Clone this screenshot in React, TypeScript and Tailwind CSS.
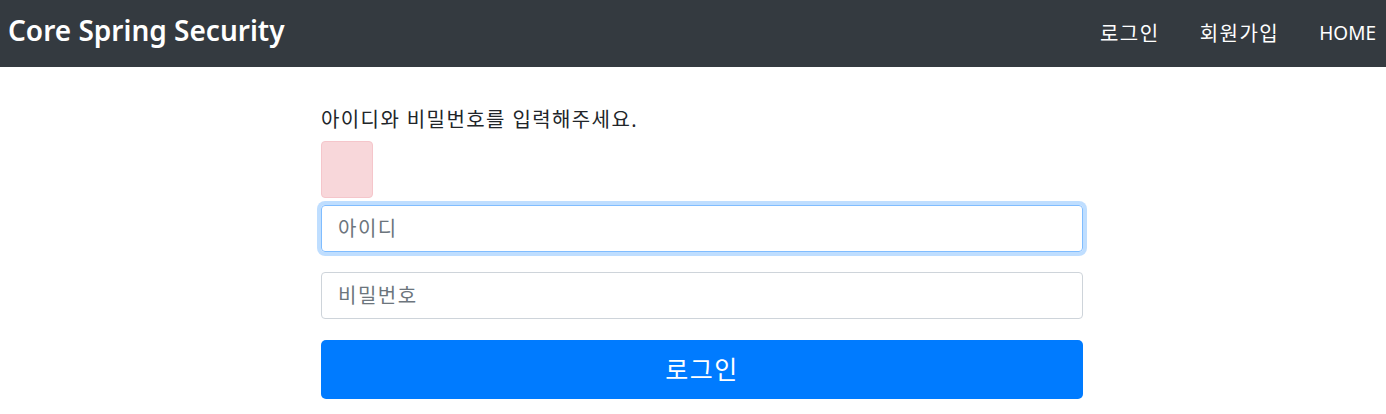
import React from 'react';

const font = { fontFamily: '"Noto Sans", "Noto Sans CJK KR", sans-serif' };

function Navbar() {
  return (
    <div className="flex h-[67px] items-center justify-between bg-[#343a40] pl-[8px] pr-[10px]">
      <div className="pb-[8px] text-[28px] font-semibold text-white">Core Spring Security</div>
      <div className="flex items-center gap-[40px] text-[20px] text-white">
        <span className="tracking-[1.5px]">로그인</span>
        <span className="tracking-[1.5px]">회원가입</span>
        <span className="text-[19px]">HOME</span>
      </div>
    </div>
  );
}

export default function App() {
  return (
    <div className="min-h-[414px] bg-white text-[#212529]" style={font}>
      <Navbar />
      <div className="ml-[321px] w-[762px] pt-[39px]">
        <div className="text-[20px] leading-[28px] tracking-[1.4px]">아이디와 비밀번호를 입력해주세요.</div>
        <div className="mt-[7px] h-[57px] w-[52px] rounded-[4px] border border-[#f5c6cb] bg-[#f8d7da]" />
        <div className="mt-[7px] flex h-[47px] items-center rounded-[4px] border border-[#80bdff] px-[16px] text-[20px] tracking-[1.5px] text-[#6c757d] shadow-[0_0_0_4px_rgba(0,123,255,0.25)]">
          아이디
        </div>
        <div className="mt-[20px] flex h-[47px] items-center rounded-[4px] border border-[#ced4da] px-[16px] text-[20px] tracking-[1.5px] text-[#6c757d]">
          비밀번호
        </div>
        <div className="mt-[21px] flex h-[59px] items-center justify-center rounded-[5px] bg-[#007bff] text-[25px] tracking-[1.5px] text-white">
          로그인
        </div>
      </div>
    </div>
  );
}
